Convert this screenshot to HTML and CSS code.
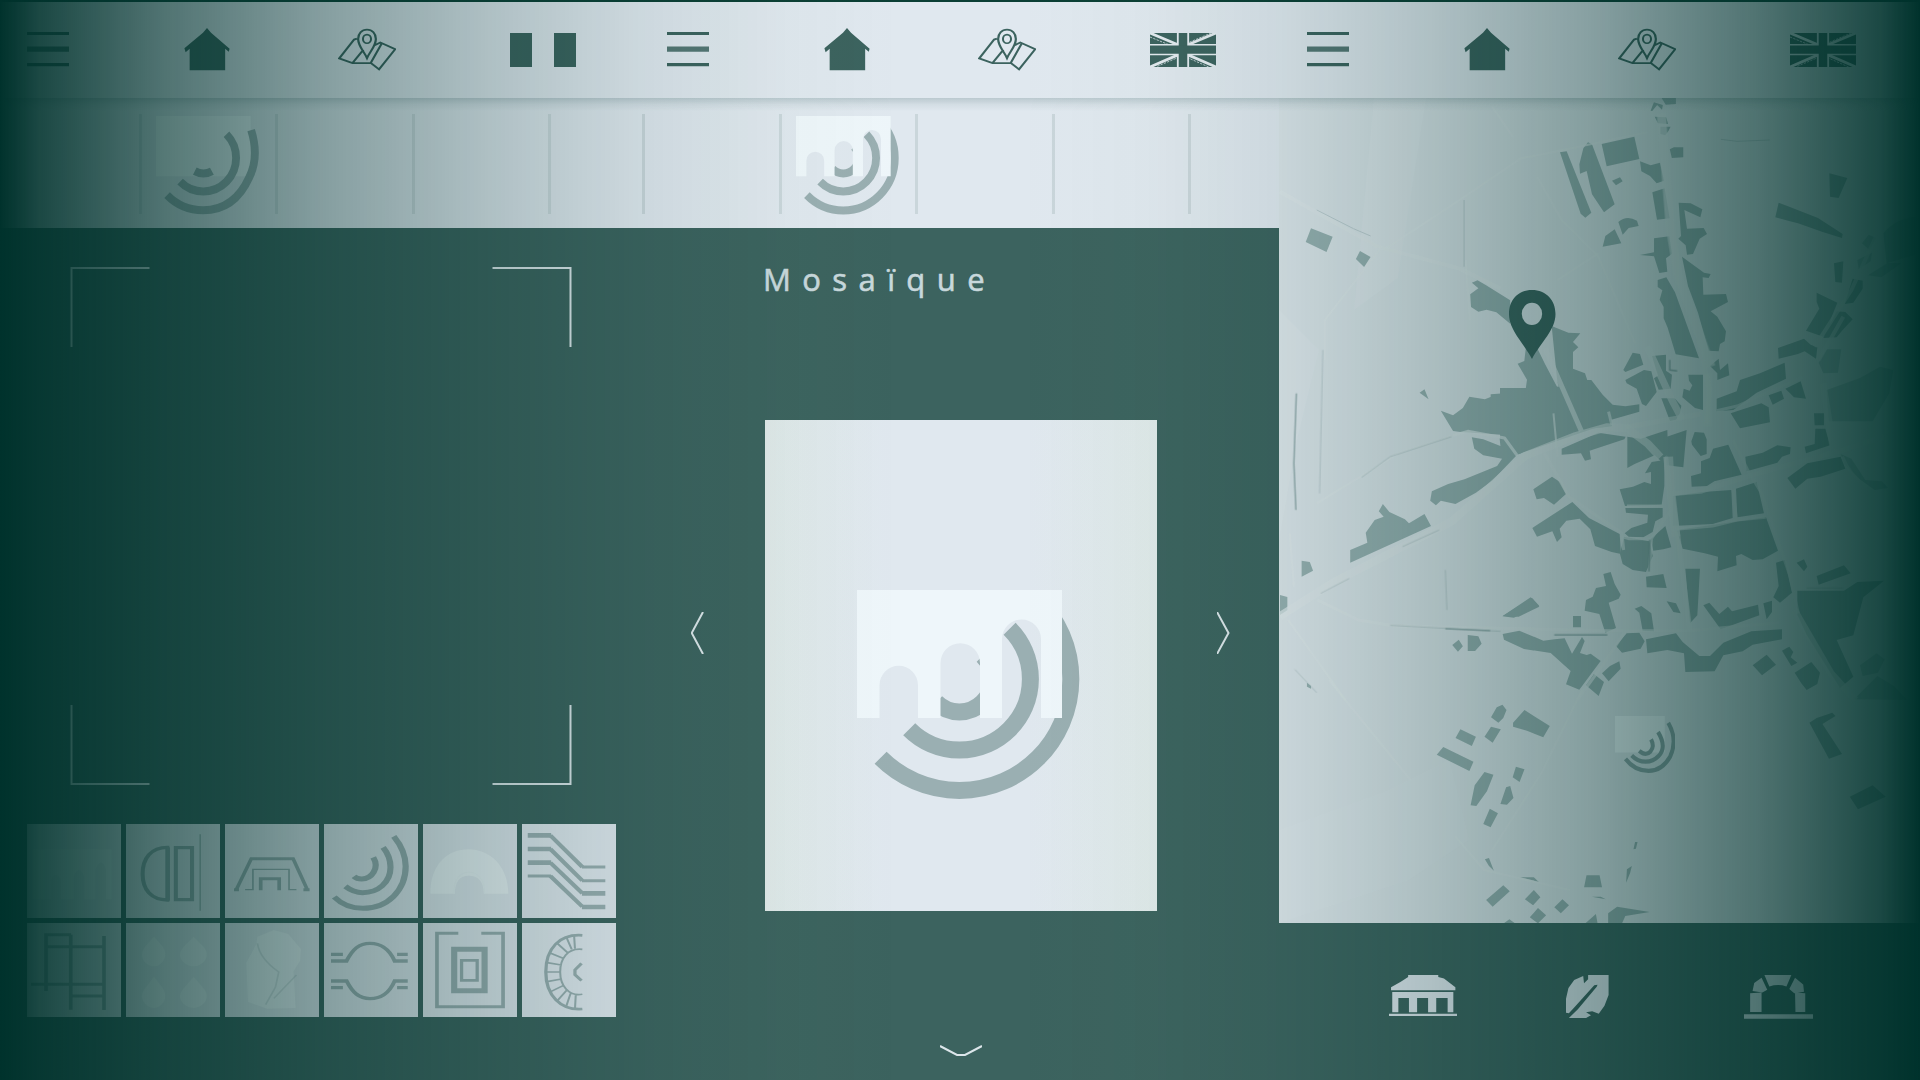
FILE: index.html
```html
<!DOCTYPE html>
<html lang="fr">
<head>
<meta charset="utf-8">
<title>Mosaïque</title>
<link rel="stylesheet" href="styles.css">
</head>
<body>
<svg class="defs" width="0" height="0">
  <symbol id="menu" viewBox="0 0 42 36" preserveAspectRatio="none"><path d="M0 1.5h42M0 33.5h42" stroke="currentColor" stroke-width="3.2"/><path d="M0 17.5h42" stroke="currentColor" stroke-width="5.4" opacity=".85"/></symbol>
  <symbol id="home" viewBox="450 84 114 130" preserveAspectRatio="none"><path fill="currentColor" d="M507 84l10 14 46 49-2 9-9-9v65h-88v-65l-10 10-3-12 46-47z"/></symbol>
  <symbol id="plan" viewBox="826 84 144 130" preserveAspectRatio="none"><path fill="none" stroke="currentColor" stroke-width="5.5" d="M873 116l-7 3-37 57 33 14h46l20 19 40-61-37-20-14 8M862 190l27-40M907 190l27-58M898 175c-7-20-22-36-22-58 0-16 9-28 22-28s22 12 22 28c0 22-15 38-22 58z"/><ellipse cx="898" cy="117" rx="10" ry="13" fill="none" stroke="currentColor" stroke-width="5"/></symbol>
  <symbol id="uk" viewBox="0 0 162 102" preserveAspectRatio="none"><path fill="currentColor" d="M0 0h162v102H0z"/><g stroke="#e4ebf0" fill="none"><path stroke-width="8" d="M0 0l68 35M162 0L94 35M0 102l68-36M162 102L94 66"/><path stroke-width="2" stroke-dasharray="6 3" d="M0 12l50 25M150 0l-54 28M18 100l50-26M144 102l-50-27"/><path stroke-width="30" d="M81 0v102"/><path stroke-width="34" d="M0 50h162"/></g><path stroke="currentColor" stroke-width="21" d="M81 0v102"/><path stroke="currentColor" stroke-width="25" d="M0 50h162"/></symbol>
  <symbol id="fr" viewBox="0 0 66 34" preserveAspectRatio="none"><path fill="currentColor" d="M0 0h22v34H0zM44 0h22v34H44z"/></symbol>
  <symbol id="mosaic" viewBox="0 0 223 210" preserveAspectRatio="none"><g fill="none" stroke="#9aafb2" stroke-width="17"><path d="M181.200 10.200a111.400 111.400 0 0 1-157.600 157.600"/><path d="M152.600 38.800a70.900 70.900 0 0 1-100.400 100.400"/><path d="M125.700 65.700a32.900 32.900 0 0 1-46.600 46.600"/></g><path class="arcade" fill-rule="evenodd" d="M0 0h205v128h-21V49a19.500 19.500 0 0 0-39 0v79h-22V73a19.700 19.700 0 0 0-39.500 0v55H61V95a19.200 19.200 0 0 0-38.500 0v33H0z"/></symbol>
  <symbol id="mosaic-dim" viewBox="0 0 223 210" preserveAspectRatio="none"><path class="arcade" d="M0 0h205v128H0z"/><g fill="none" stroke="#9aafb2" stroke-width="17"><path d="M206 30q18 56-4 100-32 70-100 70-46 0-78-32"/><path d="M152.600 38.800a70.900 70.900 0 0 1-100.400 100.400"/><path d="M121 117q-18 10-37 0"/></g></symbol>
  <symbol id="rings" viewBox="0 0 223 210" preserveAspectRatio="none"><path class="arcade" d="M0 0h185v128H0z"/><g fill="none" stroke="#8ba3a5" stroke-width="15"><path d="M198 24q36 58 7 118-30 50-80 50-52 0-86-42"/><path d="M160 56q34 54 2 84-20 20-48 20-30 0-52-22"/><path d="M134 82q14 24-2 42-18 18-42-2"/></g></symbol>
</svg>

<main class="screens">
  <section class="screen">
    <header class="bar">
      <svg class="i-menu"><use href="#menu"/></svg><svg class="i-home"><use href="#home"/></svg><svg class="i-plan"><use href="#plan"/></svg><svg class="i-flag"><use href="#fr"/></svg>
    </header>
    <div class="strip dim"><div class="cell"></div><div class="cell"><svg class="thumb"><use href="#mosaic-dim"/></svg></div><div class="cell"></div><div class="cell"></div><div class="cell"></div></div>
    <div class="viewer">
      <svg class="frame" viewBox="0 0 501 518"><path d="M79 1H1v79M422 1h78v79M1 438v79h78M500 438v79h-78"/></svg>
    </div>
    <div class="tiles">
      <svg preserveAspectRatio="none" viewBox="66 72 231 283"><path class="w" opacity=".5" d="M80 148h195v150h-14V210q-12-45-26 0v88h-28V230q-12-40-26 0v68h-32V240q-12-30-24 0v58H80z"/></svg>
      <svg preserveAspectRatio="none" viewBox="308 72 231 283"><path stroke-width="10" d="M410 142C370 142 349 175 349 222S370 300 410 300zM431 143h40v156h-40z"/><path stroke-width="9" d="M412 142v160"/><path stroke-width="3" d="M491 103v229"/></svg>
      <svg preserveAspectRatio="none" viewBox="554 72 228 283"><path stroke-width="9" d="M576 269h12M582 268l36-92h102l34 92M745 269h15M641 271v-35h45v35"/><path stroke-width="4" d="M603 269h19v-61h88v61h18"/></svg>
      <svg preserveAspectRatio="none" viewBox="796 72 228 283"><g stroke-width="15"><path d="M966 109c20 30 29 60 29 90 0 72-44 126-104 126-30 0-52-12-70-34"/><path d="M940 142c12 18 18 36 18 60 0 45-30 76-68 76-18 0-30-8-42-19"/><path d="M916 172c16 32-4 65-28 65-8 0-14-2-19-8"/></g></svg>
      <svg preserveAspectRatio="none" viewBox="1039 72 228 283"><path class="w" opacity=".6" d="M1057 281c0-88 42-133 93-133s97 50 97 133h-60c0-38-14-54-37-54s-33 20-33 54z"/><path class="ws" stroke-width="3" d="M1114 280c0-40 14-63 37-63s38 22 38 63"/></svg>
      <svg preserveAspectRatio="none" viewBox="1281 72 228 283"><path stroke-width="14" d="M1295 106h57M1295 147h57M1295 188h57M1427 280h57M1427 321h57"/><path stroke-width="9" d="M1295 228h57M1427 201h57M1427 242h57"/><path stroke-width="11" d="M1350 106l78 95M1350 147l78 95M1350 188l78 92M1350 228l78 92"/></svg>
      <svg preserveAspectRatio="none" viewBox="66 369 231 283"><path stroke-width="9" d="M113 573V404h62M174 404v225M256 408v222M112 440h145M76 553h181M174 588h82"/></svg>
      <svg preserveAspectRatio="none" viewBox="308 369 231 283"><path class="w" opacity=".6" d="M377 410l20 27c20 33-2 62-20 62s-44-28-20-62zM475 410l22 27c26 33-2 62-22 62s-50-28-22-62zM377 530l20 32c20 33-2 62-20 62s-44-28-20-62zM475 530l22 32c26 33-2 62-22 62s-50-28-22-62z"/></svg>
      <svg preserveAspectRatio="none" viewBox="554 369 228 283"><path class="w" opacity=".6" d="M633 410l40-20 35 12 31 45-2 35-16 32 5 110-70 2-46-20-4-118 24-55z"/><path stroke-width="4" opacity=".3" d="M633 430q5 45 52 86l-8 45-24 53M728 525l-55 70"/></svg>
      <svg preserveAspectRatio="none" viewBox="796 369 228 283"><path stroke-width="10" d="M813 483h38c14-34 30-53 57-53s48 19 60 53h32M813 463h29M974 463h26M813 543h38c14 34 30 53 57 53s48-19 60-53h32M813 563h29M974 563h26"/></svg>
      <svg preserveAspectRatio="none" viewBox="1039 369 228 283"><path stroke-width="9" d="M1125 400h-52v220h161V400h-53"/><path stroke-width="15" d="M1115 448h74v124h-74z"/><path stroke-width="8" d="M1133 481h38v60h-38z"/></svg>
      <svg preserveAspectRatio="none" viewBox="1281 369 228 283"><path stroke-width="8" d="M1428 406c-56-5-89 40-89 110s36 116 89 111M1426 490l-16 20v14l16 18"/><path stroke-width="5" d="M1428 448c-36-5-54 28-54 68s20 74 54 67M1340 516h34M1342 488l35 7M1351 460l30 15M1367 430l25 28M1390 414l12 34M1408 408l2 38M1342 545l35-8M1351 575l30-18M1367 602l24-33M1388 622l12-44M1410 628l2-44"/></svg>
    </div>
  </section>

  <section class="screen">
    <header class="bar">
      <svg class="i-menu"><use href="#menu"/></svg><svg class="i-home"><use href="#home"/></svg><svg class="i-plan"><use href="#plan"/></svg><svg class="i-flag"><use href="#uk"/></svg>
    </header>
    <div class="strip"><div class="cell"></div><div class="cell"><svg class="thumb"><use href="#mosaic"/></svg></div><div class="cell"></div><div class="cell"></div><div class="cell"></div></div>
    <h1 class="title">Mosaïque</h1>
    <div class="carousel">
      <svg class="arrow" viewBox="0 0 14 42"><path d="M12 0L.700 21 12 42"/></svg>
      <div class="card"><svg class="mosaic"><use href="#mosaic"/></svg></div>
      <svg class="arrow" viewBox="0 0 14 42"><path d="M0 0l11.500 21L0 42"/></svg>
    </div>
    <svg class="down" viewBox="0 0 42 13"><path d="M0 1l17 9h8L42 1"/></svg>
  </section>

  <section class="screen">
    <header class="bar">
      <svg class="i-menu"><use href="#menu"/></svg><svg class="i-home"><use href="#home"/></svg><svg class="i-plan"><use href="#plan"/></svg><svg class="i-flag"><use href="#uk"/></svg>
    </header>
    <svg class="map" viewBox="1279 98 641 825">
      <g class="land">
        <path d="M1374 98h52l-28 180-44 32zM1279 310l40 40-22 90-18 100z"/>
        <path opacity=".6" d="M1279 830l110-40 60-30 20 80-60 40-130 43z"/>
      </g>
      <g class="build" transform="translate(1280 0) scale(.40816 .33333)">
        <path d="M76 685l53 25-15 46-51-30zM196 753l26 18-16 30-20-24zM934 292h36v20l-25 2zM908 332l8-25 22 8-2 14-12-14-12 18zM918 350l28 2 5 20-25-2zM932 380h25l-5 12-8 14-12-4zM955 448l10-6h23v30l-28 2z"/>
        <path d="M470 848l14-7 20 14 60 46v70l-34-34-24-8-20 6-18-14-2-38 20-18z"/>
      </g>
      <g class="build" transform="translate(1500 120) scale(.33333)">
        <path d="M180 97l20-3 74 184-18 15-14-12zM250 85l14-18 12 6 68 180-32 24-36-54-16-70-20 8-2-28zM305 72l98-22 15 67-98 22zM420 124l32 12 28-8 12 54-22 8-20-22-26-14zM336 182l24-10 8 12-20 12zM457 217l37-12 15 90-38 4zM536 248l36 2 35 18-6 24-48-22 8 56 50-2 10 18-22 14-20 46-18 2-4-28-22-20 8-8zM308 380l8-32 28-20 20 42zM355 306q25-22 56-4l5 16-30 6-18 20zM462 355l46-6 8 52-18 14 4 40-24 4-16-50-42-4 42-8zM473 480l26-8 26 45 72 198-70-12-24-80-12-28v-34l-12-22 8-28-14-10zM546 410l66 48 20 4-6 12-18-2 2 52 68-2 6 24-52 28 20 16 26 44-4 30-14 8-4 22-30-2-32-114-30-80zM155 618l50 20 36 2-22 26 16 16-16 14v50l36 14 30 90 40 24v46l-100 10-54-130-36-68-22-45-10 9-26-8-4 35-20 8 28 48-5 36-104 8v96h240l-40-134z"/>
        <path d="M370 750l28-52 22 4 10 32-54 22zM376 780l56-30 22 4 16 62-32 42-12-6-16-46-30-16zM456 708l42-4v48l18 12-4 42-36 3-14-34 12-8zM565 764h44v106l-24-6-38-32 4-26 18 6 8-16-10-14zM630 738l26-22 4 34 24-20 4 36-36 14v-20zM650 836l60-22 10-34 60-20 74-32 4 48-88 42-70 52-50 4zM692 880l92-30 22 12 4 45-90 18zM806 826l38-14 8 24-34 18zM856 806l46-22 16 52-36-4zM834 684l78-28 20 18 20 8-4 34-34-22-20 8-58 14zM950 518l62 30-20 50-2 28-20 24-52-18 40-66-8-20zM970 654l40-80 26 2 22 22-30 32-18 22zM1034 552l24-76 30 6v24l-28 42zM1002 430l28-6-4 64-20-2zM988 160l54 14-26 60-26-4zM836 248l118 46 74 48-2 12-58-18-74-26-68-18z"/>
        <path class="faint" d="M1086 370l20-26 22 10-20 36zM1072 420l44-22-4 26-36 24zM1104 466l60-38 40 2-60 42zM1150 340q40-50 110-50v110l-100 30zM956 728l24-40h44l-10 70-44 2zM980 810l100-36 60-34 40 10-12 70-50 84H986z"/>
      </g>
      <g class="build" transform="translate(1280 340) scale(.40816 .33333)">
        <path d="M342 158l12-10 10 30zM394 212l30 14 24-22 16-34 38 8 20-10 80-22 130-10 40 128-192 80-38-60-100-8-18-3zM470 292l28 6 42 20-2-24 22 18 20 34-60 76-40 36-50 34-36-10-12 14-14-14 4-28 40-22 40-14 80-40 12-22-46-10-22-20zM172 630l42-22-4-30 22-38 22-10-12-16 10-22 16 24 38 22 10 12 38-28 16 36-198 110zM53 662l20 4 8 26-28 18zM0 765l18 6v40L0 825z"/>
        <path d="M545 829l72-56 18 24-62 36zM422 915l16-16 10 20-12 16zM460 885l26 4 8 22-16 22h-18z"/>
      </g>
      <g class="build" transform="translate(1500 380) scale(.33333)">
        <path d="M0 24h240l-6 126L50 225l-50-40zM214 0h60l34 44 30 30 38 5 42-6v22l-84 24 2 20-90 10zM185 206l110-48 82 12-4 8-104 34 4 26-18 4-12-22-58 4zM484 55h40l20 22-4 22-12 20-18 4zM560 150l-10 112-50-6-4-84zM574 184l10-28 28 2 8 20v44l-18 6-26-34zM382 264V170l40 6 80-26 2 60-14 40-26-24-60 26zM455 246l38-6v78l-8 56-110 4-16-50 40-8 34-14 20 6v-36l-18 4zM376 384h112v28l-22 12-8 32-28 16-44-2-12-10 20-16 48-16 2-24-66-6zM100 328l56-38 24 16 18 36-36 32-30-20-22 4zM97 444l120-78 50 48 92 48 4 60-28-6-50-18-14-50-32-32-40 6-20 24 6 26-14 14-14-32-46 16z"/>
        <path d="M372 470l76 14 10 44-20 48-40-6-30-18-8-30zM452 478l44-40 18 64-24 6-30 4zM518 348l90-12 86-6 4 84-60 18-120 6zM708 326l62-20 22 94-80 12zM530 450l268-38 36 100-46 26-30 2-34-18-16 6 2 28-58 18 2-44-40-10-66-14zM575 320l-2-32 30-8v-36l26-10 10-28 46-12 40 90-82 20-22 14zM736 230l52-12 44-22 40 6-2 20-24 8-14 18-92 26zM862 294l60-44 100-20 14 36-74 24-40 6-36 30zM942 100h30v36h-28zM946 146h30l14 50-72 24-4-20 30-8zM438 590l52-8 10 42-60-2zM310 582l22-6 12 36 18 32-6 12-30 12 22 76-32 14-18-56-44-10 4-32 20-10 10-26 30-6zM8 708l84-56 26 28-62 30zM8 762l50-10 72 30 34-4 30-3 22 46 30-50 8 12-14 36 20 6 12-4 30 22-64 86-40-16 14-40-60-54-80-12-60-28zM258 916l24-34 30 24-16 42zM306 880l24-22 28-14 4 22-36 38zM219 708h24v34h-24z"/>
        <path class="faint" d="M1022 222l32 14 42 64 50 4 18 20-40 6-50-36-40-42zM1080 856l50-36 24 18-20 40-46 10zM1062 958l70-70 50 30 40 42z"/>
        <path d="M404 686l20-8 30 22 8 54-34-2-10-54zM348 798l32-38 38-2 16 26-12 22-56 12zM438 778l90-18 20 26 50 42h32l40-40 84-34 92-6v30l-88 16-30 20-58 12-26 48-88 2-4-56-50-10-60 10zM556 566l44 0-8 140-22 24zM610 676l18-8 30 34 26-22 12 14 78-20 4 32-116 42zM500 664l28 6 14 30-22-4zM790 670l26-8v34l-16 22zM828 548l26-8 22 98-36 30-20-16 16-34zM890 548l22-10 10 22-10 14zM950 588l82-32 20 24-96 34zM892 632h140l40-26 80-4-62 50-30 114-50 14 50 110-40 34-100-160-28-60zM758 856l42-32 28 30-42 32zM846 812l22-12 12 16-8 16 20 16-18 10zM884 878l50-32 26 32-8 34-32 18-16-20z"/>
      </g>
      <g class="build" transform="translate(1280 680) scale(.40816 .33333)">
        <path d="M517 112l14-30 14-8 10 16-8 24-12 14zM571 128l28-38 62 48-16 34-40-20-34-12zM501 170l16-30 24 8-20 40zM430 174l12-26 38 22-10 28zM384 224l16-23 74 44-10 28zM570 292l8-32 21 8-12 38zM540 372l14-50 10-4 8 36-16 20zM467 376l10-60 24-40 22 8-16 50-26 44zM498 432l16-46 20 14-18 42zM505 660l42-44 16 18-42 46zM600 658l22-28 16 22-18 24zM672 682l20-24 16 18-20 24zM612 712l20-28 20 22-20 24zM745 622l6-36h32l6 36zM748 730l26-28 4 28zM804 730v-30l22-20 80 16-60 12-8 22zM548 730l14-12 14 12zM502 538l10-4 12 38-12-14zM588 592l34 0 12 14zM764 650l22 0 12 8zM848 608l2-40 12-10-4 20zM866 508l4-22h6l-4 20zM1297 128l18-14 38-16 8 10-32 24 48 90-32 14zM1396 350l56-34 32 34-68 38zM66 8l10 10v8l-10-6z"/>
      </g>
      <g class="roads" transform="translate(1280 340) scale(.40816 .33333)">
        <path stroke-width="8" d="M0 828L130 728 420 545 600 348 720 290 800 262 850 264 900 310 932 352"/>
        <path stroke-width="5" d="M846 262L1032 222M1026 0l26 150-6 100M650 26l88 246M950 462l80-8 130-50 220-74 100-40M960 460l14 120 30 290M945 350l10 110 10 110"/>
        <path stroke-width="9" d="M952 350l4 90 14 150M1048 100v160"/>
        <path stroke-width="7" d="M986 240l-26-60-60-160M1330 130l26 200M1260 810l90 190 60 80"/>
        <path stroke-width="3" d="M1070 212l50-14 160-86M1110 300l40 100 30 60 70 250 20 110M970 568l90-10 60-18 70-8M1110 448l8 90M850 498h90M836 590l18 6h56l50-90M910 598l-6 110M648 340l60 130 130 110 4 50M424 286l36-12 90 20 32 54M92 780l100 60 90 18 520 14h200l220-24M848 870l-60 110-60 100M805 215l8 40M1378 350q20 60 60 90"/>
        <path stroke-width="2" d="M24 580l10 160M20 840l140 240M90 490l200-150 130-52M680 350l-10-130"/>
      </g>
      <g class="roads" transform="translate(1280 0) scale(.40816 .33333)">
        <path stroke-width="9" d="M934 340l22 340 20 150 80 270"/>
        <path stroke-width="4" d="M0 575l240 165 200 66 100 60M1310 1040l90-170 60-160M1320 1080l60-130"/>
        <path stroke-width="2" d="M260 745l180-145 150-125 60-14 250-64M250 740L110 960v120M520 320l50 90M630 530l60 130 90 110 90 260M455 780l10 180M680 840l100-80"/>
      </g>
      <g class="roads" transform="translate(1280 680) scale(.40816 .33333)"><path stroke-width="2" d="M740 30L640 280 520 510M120 0l200 300M430 470l70 100 210 60"/></g>
      <g class="hair" transform="translate(1280 340) scale(.40816 .33333)"><path class="strong" d="M40 160l-6 210 5 140M672 885h130M906 600l-2 94M955 60v30l18 3M405 866l110 6"/><path d="M105 30l-8 430M200 412l70-62 150-60M300 620l90-50M100 760l70-45M405 690l4 120M270 856l270 18M1290 744h90M36 988l54 70"/></g>
      <g class="hair" transform="translate(1280 0) scale(.40816 .33333)"><path d="M90 630l90 56 42 22M451 600v200M1080 418l40 6 80-4"/></g>
      <svg x="1615" y="716" width="60" height="60" class="mark"><use href="#rings"/></svg>
      <path class="pin" fill-rule="evenodd" d="M1532 290c-14 0-23 10-23 24 0 16 14 28 23 45 9-17 23.500-29 23.500-45 0-14-9.500-24-23.500-24zm0 12.700a10.200 11.200 0 1 1-.1 22.400 10.200 11.200 0 0 1 .1-22.400z"/>
    </svg>
    <nav class="tabs">
      <svg preserveAspectRatio="none" class="t-villa" viewBox="267 887 167 121"><path d="M314 887h74v6l14 4 28 26v9H272v-9l24-16 18-14zM275 937h150v60h-14v-42h-28v42h-20v-42h-27v42h-20v-42h-26v42h-15zM267 1001h167v7H267z"/></svg>
      <svg preserveAspectRatio="none" class="t-leaf" viewBox="702 883 105 129"><path d="M756 883h50v60l-10 32-14 24-16-7-15 3 12 9-12 8h-42l22-26 46-68 2-6-8 2-50 68-12 16-7-2v-42l6-32 14-24 22-12 2 22 10-12z"/></svg>
      <svg preserveAspectRatio="none" class="t-arch" viewBox="1137 887 169 131"><path d="M1187 887h66l-12 34q-20-8-42 0zM1180 895l14 36-12 8-24-4 4-24zM1262 895l20 20 2 22-24 4-12-12zM1152 941l28-2v58h-28zM1262 939l25 2v56h-24zM1137 1004h169v13h-169z"/></svg>
    </nav>
  </section>
</main>
<div class="vignette"></div>
</body>
</html>
```
FILE: styles.css
```css
* { box-sizing: border-box; }
body {
  margin: 0;
  width: 1920px;
  height: 1080px;
  overflow: hidden;
  position: relative;
  background: #3c635f;
  font-family: "Open Sans", "Noto Sans", sans-serif;
}
svg { display: block; }
.defs { position: absolute; }
.screens {
  display: grid;
  grid-template-columns: repeat(3, 640px);
  height: 1080px;
  border-top: 2px solid #0b3f35;
}
.screen { display: flex; flex-direction: column; min-width: 0; }

.bar {
  flex: none;
  height: 96px;
  padding-left: 27px;
  display: grid;
  grid-template-columns: 157px 154px 172px auto;
  align-items: start;
  background: #e0e8ef;
  color: #3c635f;
  position: relative;
  z-index: 1;
}
.bar::after {
  content: "";
  position: absolute;
  left: 0;
  right: 0;
  top: 96px;
  height: 13px;
  background: linear-gradient(rgba(100, 130, 135, .3), rgba(100, 130, 135, .1) 50%, transparent);
}
.i-menu { width: 42px; height: 35px; margin-top: 30px; }
.i-home { width: 46px; height: 43px; margin-top: 26px; }
.i-plan { width: 58px; height: 43px; margin-top: 26px; }
.i-flag { width: 66px; height: 34px; margin-top: 31px; }

.strip {
  flex: none;
  height: 130px;
  padding: 16px 0 14px 2px;
  display: flex;
  background: #e0e8ef;
  overflow: hidden;
}
.cell {
  flex: 0 0 136.600px;
  border-left: 3px solid #cad6db;
  padding: 2px 0 0 14px;
}
.dim .cell { border-left-color: #cdd9de; }
.dim .cell:first-child { border-left-color: transparent; }
.thumb { width: 103px; height: 99px; }
.arcade { fill: #eef6fa; }
.dim .arcade { opacity: .4; }

.viewer { padding: 39px 0 0 70px; height: 596px; }
.frame { width: 502px; height: 518px; fill: none; stroke: #dce6ea; stroke-width: 2; }
.tiles {
  display: grid;
  grid-template-columns: repeat(6, 93.600px);
  grid-auto-rows: 94.300px;
  column-gap: 5.500px;
  row-gap: 4.700px;
  padding-left: 27px;
}
.tiles svg {
  width: 100%;
  height: 100%;
  background: #e0e8ef;
  fill: none;
  stroke: #9aafb2;
}
.tiles .w { fill: #f2fafc; stroke: none; }
.tiles .ws { stroke: #e8f1f5; }

.title {
  margin: 31px 0 0 123px;
  font-size: 31px;
  line-height: 40px;
  font-weight: 400;
  letter-spacing: 11.400px;
  color: #c8d8dc;
  -webkit-text-stroke: .6px #c8d8dc;
}
.carousel {
  margin-top: 121px;
  display: grid;
  grid-template-columns: 14px 392px 14px;
  column-gap: 60px;
  padding-left: 51px;
  align-items: center;
}
.arrow { width: 14px; height: 42px; margin-top: -66px; }
.arrow, .down { fill: none; stroke: #dce6ea; stroke-width: 2; }
.card {
  height: 491px;
  background: linear-gradient(90deg, #dfe9e9, #e0e8ef 30%, #e0e8ef 68%, #dfe9e9);
  padding: 170px 0 0 92px;
}
.mosaic { width: 223px; height: 210px; }
.down { width: 42px; height: 13px; margin: 134px 0 0 300px; }

.map { width: 641px; height: 825px; margin-left: -1px; flex: none; background: #dce5ea; }
.land { fill: #e3ebf0; opacity: .4; }
.build { fill: #97b0b1; }
.build .faint { opacity: .55; }
.roads path { fill: none; stroke: #e0e9ec; vector-effect: non-scaling-stroke; opacity: .7; stroke-linejoin: round; }
.hair path { fill: none; stroke: #93a9ad; stroke-width: 1; vector-effect: non-scaling-stroke; opacity: .4; }
.hair .strong { stroke: #8aa3a5; stroke-width: 1.500; opacity: .85; }
.mark .arcade { fill: #e6eef2; opacity: .3; }
.pin { fill: #3c635f; }

.tabs {
  display: grid;
  grid-template-columns: 177px 178px auto;
  padding: 52px 0 0 109px;
  fill: #e0e8ef;
}
.t-villa { width: 68px; height: 41px; }
.t-leaf { width: 43px; height: 43px; }
.t-arch { width: 69px; height: 44px; }

.vignette {
  position: absolute;
  z-index: 2;
  inset: 0;
  pointer-events: none;
  background: linear-gradient(90deg,
    rgba(0,50,44,1) 0, rgba(0,50,44,.96) 14px, rgba(0,50,44,.88) 40px, rgba(0,50,44,.8) 80px,
    rgba(0,50,44,.645) 163px, rgba(0,50,44,.52) 245px, rgba(0,50,44,.4) 327px,
    rgba(0,50,44,.31) 408px, rgba(0,50,44,.22) 490px, rgba(0,50,44,.145) 571px,
    rgba(0,50,44,.085) 640px, rgba(60,110,60,.025) 790px, rgba(0,50,44,0) 900px,
    rgba(0,50,44,0) 1020px, rgba(60,110,60,.025) 1145px, rgba(0,50,44,.085) 1280px,
    rgba(0,50,44,.145) 1349px, rgba(0,50,44,.22) 1430px, rgba(0,50,44,.31) 1512px,
    rgba(0,50,44,.4) 1593px, rgba(0,50,44,.52) 1675px, rgba(0,50,44,.645) 1757px,
    rgba(0,50,44,.8) 1840px, rgba(0,50,44,.88) 1880px, rgba(0,50,44,.96) 1906px, rgba(0,50,44,1) 1920px);
}
```
